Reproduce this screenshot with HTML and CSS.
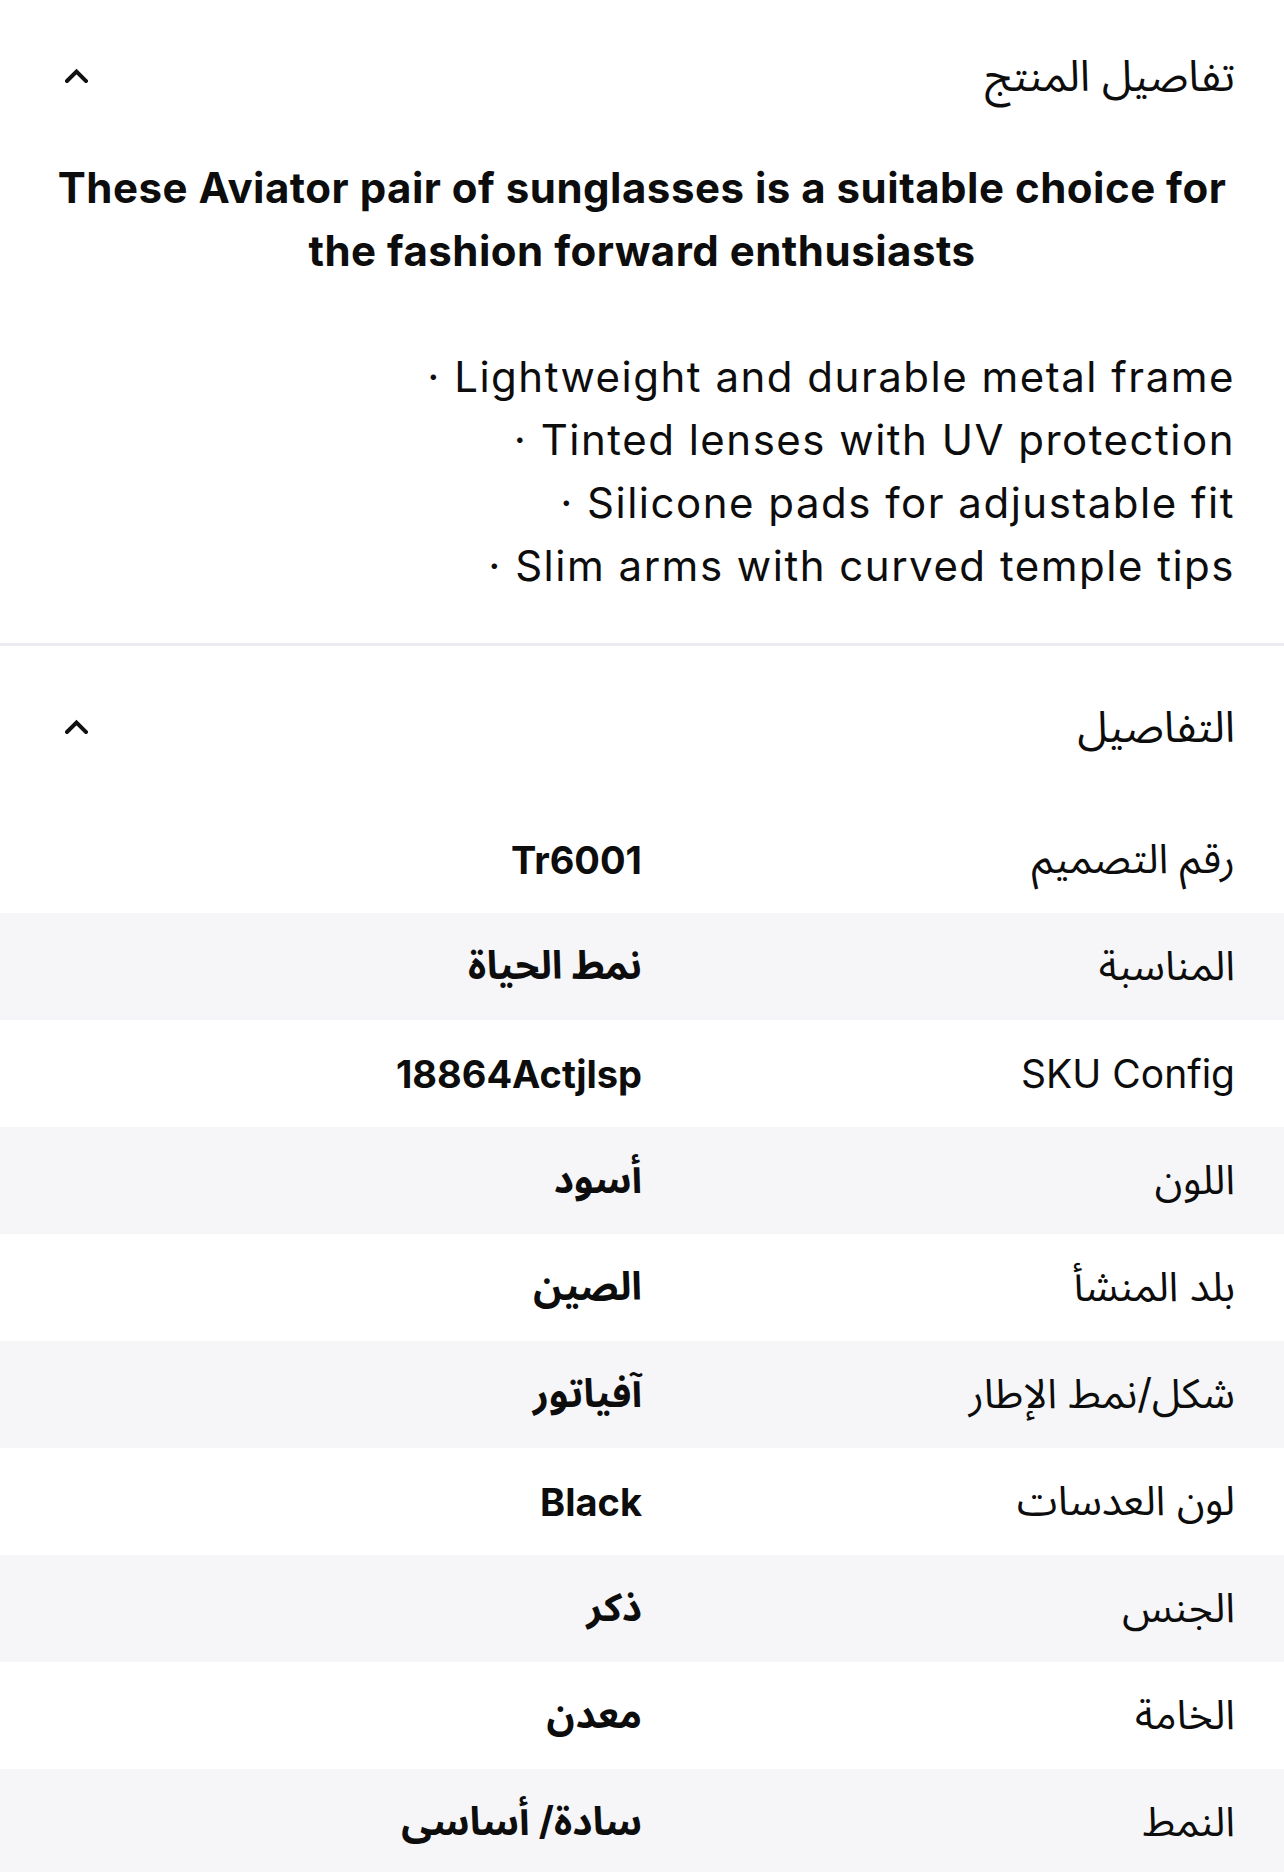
FILE: index.html
```html
<!DOCTYPE html>
<html lang="ar" dir="rtl">
<head>
<meta charset="utf-8">
<title>تفاصيل المنتج</title>
<link rel="stylesheet" href="styles.css">
</head>
<body>
<section class="panel panel-desc">
  <div class="panel-head">
    <h2 class="panel-title">تفاصيل المنتج</h2>
    <svg class="chev" width="23" height="15" viewBox="0 0 23 15"><polyline points="2,13 11.5,3.5 21,13" fill="none" stroke="#111" stroke-width="4" stroke-linecap="square"/></svg>
  </div>
  <div class="desc" dir="ltr" lang="en">
    <p class="desc-lead">These Aviator pair of sunglasses is a suitable choice for<br>the fashion forward enthusiasts</p>
    <ul class="desc-list">
      <li>· Lightweight and durable metal frame</li>
      <li>· Tinted lenses with UV protection</li>
      <li>· Silicone pads for adjustable fit</li>
      <li>· Slim arms with curved temple tips</li>
    </ul>
  </div>
</section>
<section class="panel panel-specs">
  <div class="panel-head head-specs">
    <h2 class="panel-title">التفاصيل</h2>
    <svg class="chev" width="23" height="15" viewBox="0 0 23 15"><polyline points="2,13 11.5,3.5 21,13" fill="none" stroke="#111" stroke-width="4" stroke-linecap="square"/></svg>
  </div>
  <div class="specs">
    <div class="row"><div class="k">رقم التصميم</div><div class="v" lang="en">Tr6001</div></div>
    <div class="row alt"><div class="k">المناسبة</div><div class="v">نمط الحياة</div></div>
    <div class="row"><div class="k" lang="en">SKU Config</div><div class="v" lang="en">18864Actjlsp</div></div>
    <div class="row alt"><div class="k">اللون</div><div class="v">أسود</div></div>
    <div class="row"><div class="k">بلد المنشأ</div><div class="v">الصين</div></div>
    <div class="row alt"><div class="k">شكل/نمط الإطار</div><div class="v">آفياتور</div></div>
    <div class="row"><div class="k">لون العدسات</div><div class="v" lang="en">Black</div></div>
    <div class="row alt"><div class="k">الجنس</div><div class="v">ذكر</div></div>
    <div class="row"><div class="k">الخامة</div><div class="v">معدن</div></div>
    <div class="row alt"><div class="k">النمط</div><div class="v">سادة/ أساسى</div></div>
  </div>
</section>
</body>
</html>
```
FILE: styles.css
```css
html, body {
  margin: 0;
  padding: 0;
  background: #ffffff;
}
body {
  font-family: "Inter", "Noto Sans Arabic", "DejaVu Sans", sans-serif;
  color: #0d0d0d;
  overflow: hidden;
}
.panel {
  padding: 0 49px;
}
.panel-desc {
  padding-bottom: 46px;
  border-bottom: 3px solid #ececf0;
}
.panel-head {
  height: 150px;
  display: flex;
  align-items: center;
  justify-content: space-between;
}
.head-specs {
  height: 160px;
}
.panel-title {
  margin: 0;
  font-size: 43px;
  font-weight: 400;
  line-height: 1;
}
.chev {
  display: block;
  margin-left: 16px;
}
.desc {
  margin-top: 6px;
  font-size: 42px;
  line-height: 63px;
}
.desc-lead {
  margin: 0 0 63px 0;
  font-weight: 700;
  text-align: center;
  letter-spacing: 0.5px;
}
.desc-list {
  list-style: none;
  margin: 0;
  padding: 0;
  text-align: right;
  letter-spacing: 1.5px;
}
.specs {
  margin: 0 -49px;
}
.row {
  height: 107px;
  display: grid;
  grid-template-columns: 1fr 1fr;
  align-items: center;
  padding: 0 49px;
}
.row.alt {
  background: #f6f6f8;
}
.k {
  font-weight: 400;
  font-size: 41px;
}
.v {
  font-weight: 700;
  font-size: 39px;
}
.k:lang(en) {
  font-size: 39px;
}
.v:lang(en) {
  font-size: 38px;
}
```
